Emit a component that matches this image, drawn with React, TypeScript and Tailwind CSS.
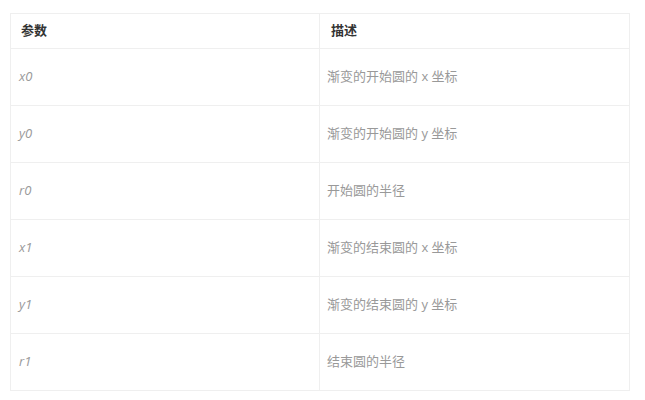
const rows = [
  { name: "x0", desc: "渐变的开始圆的 x 坐标" },
  { name: "y0", desc: "渐变的开始圆的 y 坐标" },
  { name: "r0", desc: "开始圆的半径" },
  { name: "x1", desc: "渐变的结束圆的 x 坐标" },
  { name: "y1", desc: "渐变的结束圆的 y 坐标" },
  { name: "r1", desc: "结束圆的半径" },
];

export default function App() {
  return (
    <div
      className="min-h-screen bg-white pt-[13px] pl-[10px]"
      style={{ fontFamily: '"Open Sans", "Noto Sans CJK SC", sans-serif' }}
    >
      <table className="w-[620px] border-collapse text-[13px] table-fixed">
        <thead>
          <tr className="h-[35px]">
            <th className="w-[309px] border border-[#efefef] pl-[10px] text-left font-bold text-[#333]">
              参数
            </th>
            <th className="border border-[#efefef] pl-[11px] text-left font-bold text-[#333]">
              描述
            </th>
          </tr>
        </thead>
        <tbody>
          {rows.map((r) => (
            <tr key={r.name} className="h-[57px]">
              <td className="border border-[#efefef] pl-[8px] italic text-[#999]">
                {r.name}
              </td>
              <td className="border border-[#efefef] pl-[7px] text-[#999]">
                {r.desc}
              </td>
            </tr>
          ))}
        </tbody>
      </table>
    </div>
  );
}
